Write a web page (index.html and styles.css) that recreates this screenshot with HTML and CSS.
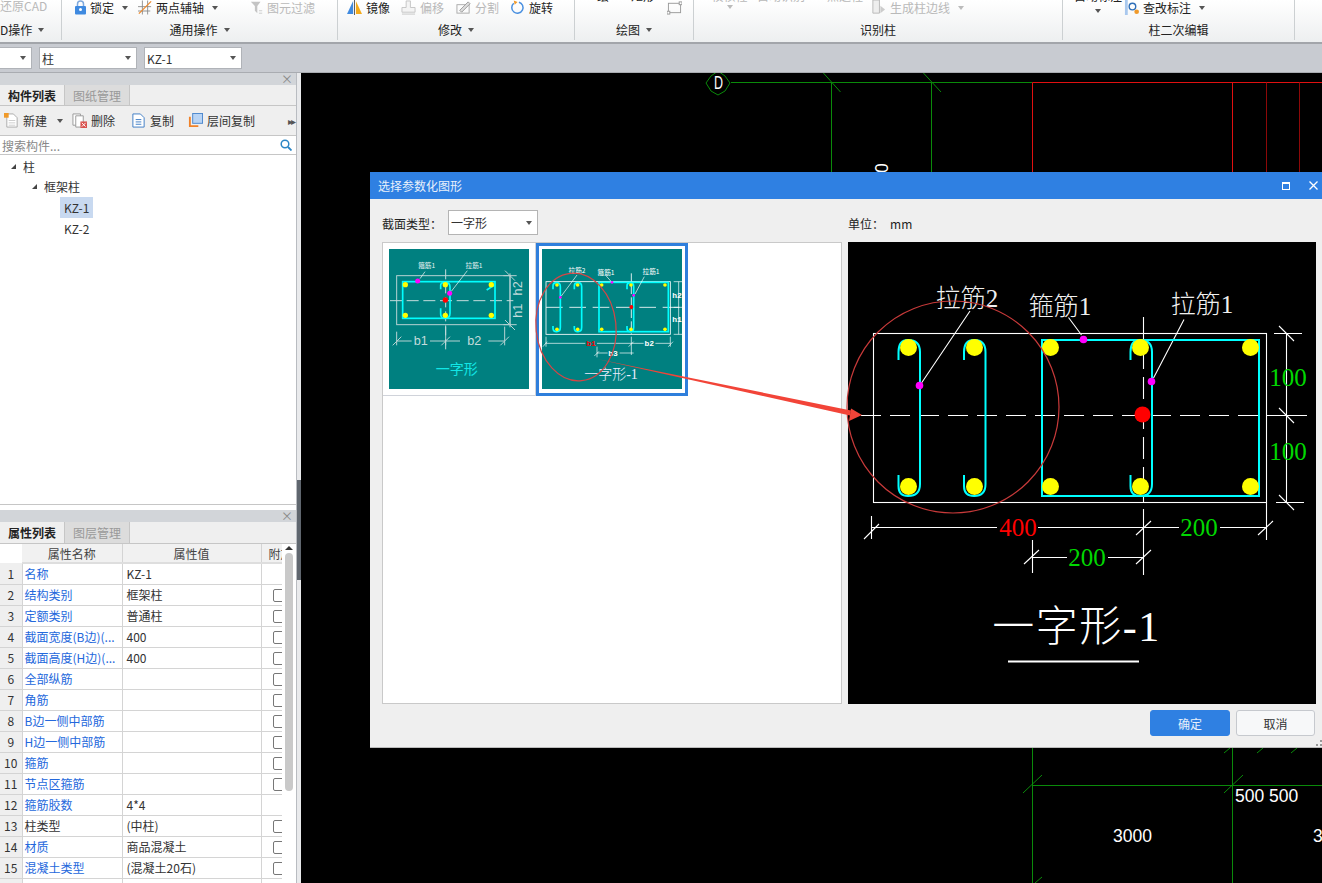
FILE: index.html
```html
<!DOCTYPE html>
<html lang="zh-CN">
<head>
    <meta charset="UTF-8">
    <title>选择参数化图形</title>
    <link rel="stylesheet" href="styles.css">
</head>
<body>

    <!-- Ribbon -->
    <header class="ribbon">
        <section class="group group-cad">
            <div class="tools"><div class="tool off"><span>还原CAD</span></div></div>
            <div class="group-label"><span>D操作</span><i class="caret"></i></div>
        </section>
        <section class="group group-common">
            <div class="tools">
                <div class="tool">
                    <svg class="icon icon-lock" viewBox="0 0 11 15"><path d="M2.500 7V4a3 3 0 0 1 6 0v3" fill="none" stroke="#7fa9dd" stroke-width="1.500"/><rect x="0" y="6" width="11" height="8.500" rx="1" fill="#3f8ae0"/><circle cx="5.500" cy="9.500" r="1.500" fill="#fff"/></svg>
                    <span>锁定</span><i class="caret"></i>
                </div>
                <div class="tool">
                    <svg class="icon icon-axis" viewBox="0 0 16 16"><path d="M0 7H15M0 12H14M5 0V16M11 0V16" stroke="#888" fill="none"/><path d="M1 15L15 1" stroke="#ee8a2c" stroke-width="1.400"/></svg>
                    <span>两点辅轴</span><i class="caret"></i>
                </div>
                <div class="tool off">
                    <svg class="icon icon-filter" viewBox="0 0 16 16"><path d="M1 1H13L9 6V15L6 12V6Z" fill="#c4c4c4"/><path d="M11 12H15M11 15H15" stroke="#c4c4c4"/></svg>
                    <span>图元过滤</span>
                </div>
            </div>
            <div class="group-label"><span>通用操作</span><i class="caret"></i></div>
        </section>
        <section class="group group-edit">
            <div class="tools">
                <div class="tool">
                    <svg class="icon" viewBox="0 0 16 16"><path d="M6.500 1V15H0Z" fill="#3f8ae0"/><path d="M9.500 1V15H16Z" fill="#f4ab1c"/><path d="M8 0V16" stroke="#555"/></svg>
                    <span>镜像</span>
                </div>
                <div class="tool off">
                    <svg class="icon" viewBox="0 0 16 16"><path d="M5.500 1H10V8H15V13H1V8H5.500Z" fill="#f4f4f4" stroke="#c4c4c4"/><path d="M1 15H15" stroke="#c4c4c4"/></svg>
                    <span>偏移</span>
                </div>
                <div class="tool off">
                    <svg class="icon" viewBox="0 0 16 16"><rect x="1" y="5" width="13" height="9" fill="none" stroke="#aaa"/><path d="M4 11L13 2L15 4L6 13Z" fill="#ddd" stroke="#999"/></svg>
                    <span>分割</span>
                </div>
                <div class="tool">
                    <svg class="icon" viewBox="0 0 16 16"><path d="M9.500 2.300A6 6 0 1 1 4 3.500" fill="none" stroke="#4a90e0" stroke-width="1.600"/><path d="M4 0.500L8 2L5 5Z" fill="#f09a2a"/></svg>
                    <span>旋转</span>
                </div>
            </div>
            <div class="group-label"><span>修改</span><i class="caret"></i></div>
        </section>
        <section class="group group-draw">
            <div class="tools">
                <span class="clipped">绘</span>
                <span class="clipped">矩形</span>
                <svg class="icon" viewBox="0 0 16 16"><rect x="1.500" y="3.500" width="13" height="10" fill="none" stroke="#999"/><rect x="0" y="12" width="3" height="3" fill="#fff" stroke="#999"/><rect x="13" y="2" width="3" height="3" fill="#fff" stroke="#999"/></svg>
            </div>
            <div class="group-label"><span>绘图</span><i class="caret"></i></div>
        </section>
        <section class="group group-identify">
            <div class="tools">
                <div class="stack"><span class="clipped off">校核柱</span><i class="caret caret-off"></i></div>
                <span class="clipped off">自动识别</span>
                <span class="clipped off">点选柱</span>
                <div class="tool off">
                    <svg class="icon" viewBox="0 0 16 16"><path d="M2 0H9V14H2Z" fill="#eee" stroke="#b8b8b8"/><path d="M10 6L15 10L10 14Z" fill="#ccc"/></svg>
                    <span>生成柱边线</span><i class="caret caret-off"></i>
                </div>
            </div>
            <div class="group-label"><span>识别柱</span></div>
        </section>
        <section class="group group-second">
            <div class="tools">
                <div class="stack"><span class="clipped">自动标注</span><i class="caret caret-low"></i></div>
                <div class="tool">
                    <svg class="icon" viewBox="0 0 16 16"><path d="M1 0H4V16H1" fill="#a9c8ee"/><circle cx="9" cy="7" r="3.500" fill="none" stroke="#2f6fb8" stroke-width="1.500"/><circle cx="13.500" cy="12.500" r="2.500" fill="#f09a2a"/></svg>
                    <span>查改标注</span><i class="caret"></i>
                </div>
            </div>
            <div class="group-label"><span>柱二次编辑</span></div>
        </section>
    </header>

    <div class="quickbar">
        <div class="combo combo-first"><i class="caret"></i></div>
        <div class="combo"><span>柱</span><i class="caret"></i></div>
        <div class="combo"><span>KZ-1</span><i class="caret"></i></div>
    </div>

    <div class="workspace">
        <aside class="side">
            <!-- Component list -->
            <section class="panel panel-list">
                <div class="panel-head">×</div>
                <div class="tabs">
                    <div class="tab active">构件列表</div>
                    <div class="tab">图纸管理</div>
                </div>
                <div class="side-tools">
                    <div class="side-tool side-new">
                        <svg class="icon" viewBox="0 0 16 16"><path d="M3 1H10L14 5V15H3Z" fill="#fff" stroke="#aaa"/><path d="M5 8H12M5 10.500H12M5 13H12" stroke="#ccc"/><rect x="0" y="0" width="5" height="5" fill="#f09a2a"/></svg>
                        <span>新建</span><i class="caret"></i>
                    </div>
                    <div class="side-tool side-del">
                        <svg class="icon" viewBox="0 0 16 16"><path d="M1 1H9V13H1Z" fill="#fff" stroke="#999"/><path d="M4 3H12V15H4Z" fill="#fff" stroke="#999"/><rect x="9" y="9" width="7" height="7" fill="#d9534f"/><path d="M10.500 10.500L14.500 14.500M14.500 10.500L10.500 14.500" stroke="#fff"/></svg>
                        <span>删除</span>
                    </div>
                    <div class="side-tool side-copy">
                        <svg class="icon" viewBox="0 0 16 16"><path d="M2 1H10L14 5V15H2Z" fill="#fff" stroke="#3d7cc4"/><path d="M5 7H11M5 9.500H11M5 12H11" stroke="#3d7cc4"/></svg>
                        <span>复制</span>
                    </div>
                    <div class="side-tool side-floor">
                        <svg class="icon" viewBox="0 0 16 16"><path d="M3 4V13H1V4ZM1 15V13H11V15Z" fill="#f0822a"/><rect x="5" y="0.500" width="10.500" height="10.500" fill="#b8d4f5" stroke="#4a86cc"/></svg>
                        <span>层间复制</span>
                    </div>
                    <div class="side-more">▸▸</div>
                </div>
                <div class="search">
                    <span>搜索构件...</span>
                    <svg class="search-icon" viewBox="0 0 12 12"><circle cx="5" cy="5" r="3.800" fill="none" stroke="#2b86c5" stroke-width="1.500"/><path d="M8 8L11.500 11.500" stroke="#2b86c5" stroke-width="1.800"/></svg>
                </div>
                <ul class="tree">
                    <li class="tree-root"><i class="tree-arrow"></i>柱</li>
                    <li class="tree-branch"><i class="tree-arrow"></i>框架柱</li>
                    <li class="tree-leaf"><span class="selected">KZ-1</span></li>
                    <li class="tree-leaf"><span>KZ-2</span></li>
                </ul>
            </section>

            <!-- Property list -->
            <section class="panel panel-props">
                <div class="panel-head">×</div>
                <div class="tabs">
                    <div class="tab active">属性列表</div>
                    <div class="tab">图层管理</div>
                </div>
                <div class="props-body">
                    <table class="props">
                        <thead>
                            <tr><th class="num"></th><th class="name">属性名称</th><th class="value">属性值</th><th class="extra">附加</th></tr>
                        </thead>
                        <tbody>
                            <tr><td class="num">1</td><td class="name"><a>名称</a></td><td class="value">KZ-1</td><td class="extra"></td></tr>
                            <tr><td class="num">2</td><td class="name"><a>结构类别</a></td><td class="value">框架柱</td><td class="extra"><i class="check"></i></td></tr>
                            <tr><td class="num">3</td><td class="name"><a>定额类别</a></td><td class="value">普通柱</td><td class="extra"><i class="check"></i></td></tr>
                            <tr><td class="num">4</td><td class="name"><a>截面宽度(B边)(...</a></td><td class="value">400</td><td class="extra"><i class="check"></i></td></tr>
                            <tr><td class="num">5</td><td class="name"><a>截面高度(H边)(...</a></td><td class="value">400</td><td class="extra"><i class="check"></i></td></tr>
                            <tr><td class="num">6</td><td class="name"><a>全部纵筋</a></td><td class="value"></td><td class="extra"><i class="check"></i></td></tr>
                            <tr><td class="num">7</td><td class="name"><a>角筋</a></td><td class="value"></td><td class="extra"><i class="check"></i></td></tr>
                            <tr><td class="num">8</td><td class="name"><a>B边一侧中部筋</a></td><td class="value"></td><td class="extra"><i class="check"></i></td></tr>
                            <tr><td class="num">9</td><td class="name"><a>H边一侧中部筋</a></td><td class="value"></td><td class="extra"><i class="check"></i></td></tr>
                            <tr><td class="num">10</td><td class="name"><a>箍筋</a></td><td class="value"></td><td class="extra"><i class="check"></i></td></tr>
                            <tr><td class="num">11</td><td class="name"><a>节点区箍筋</a></td><td class="value"></td><td class="extra"><i class="check"></i></td></tr>
                            <tr><td class="num">12</td><td class="name"><a>箍筋胶数</a></td><td class="value">4*4</td><td class="extra"></td></tr>
                            <tr><td class="num">13</td><td class="name">柱类型</td><td class="value">(中柱)</td><td class="extra"><i class="check"></i></td></tr>
                            <tr><td class="num">14</td><td class="name"><a>材质</a></td><td class="value">商品混凝土</td><td class="extra"><i class="check"></i></td></tr>
                            <tr><td class="num">15</td><td class="name"><a>混凝土类型</a></td><td class="value">(混凝土20石)</td><td class="extra"><i class="check"></i></td></tr>
                            <tr><td class="num"></td><td class="name"></td><td class="value"></td><td class="extra"><i class="check"></i></td></tr>
                        </tbody>
                    </table>
                    <div class="scrollbar">
                        <i class="scroll-up"></i>
                        <div class="scroll-thumb"></div>
                    </div>
                </div>
            </section>
        </aside>

        <div class="splitter"><div class="splitter-grip"></div></div>

        <!-- Drawing canvas -->
        <main class="canvas">
            <svg class="canvas-svg" viewBox="301 73 1021 810">
                <g class="axis-green">
                    <path d="M731 82.500H1032.500"/>
                    <path d="M831.500 82.500V172M931.500 82.500V172"/>
                    <path d="M822.500 72L840.500 92M922.500 72L941 92"/>
                    <path d="M711 76L718 71L725 76L730 83L725 91L718 95L711 91L706 83Z"/>
                    <path d="M1032.500 748V883M1232.500 748V883M1032.500 785.500H1322"/>
                    <path d="M1023 793L1042 775M1224 793L1243 775M1224 753L1230 748M1257 753L1263 748M1291 753L1297 748M1035 883L1042 877"/>
                </g>
                <g class="axis-red">
                    <path d="M1032.500 82.500H1322"/>
                    <path d="M1032.500 82.500V172M1232.500 82.500V172"/>
                    <path class="axis-dark" d="M1266.500 82.500V172M1299.500 82.500V172"/>
                </g>
                <text class="canvas-text" x="714" y="89" textLength="9" lengthAdjust="spacingAndGlyphs">D</text>
                <text class="canvas-num" x="881" y="168" text-anchor="middle" transform="rotate(90 881 168) translate(0 6)">0</text>
                <text class="canvas-num" x="1235" y="802">500</text>
                <text class="canvas-num" x="1269" y="802">500</text>
                <text class="canvas-num" x="1113" y="842">3000</text>
                <text class="canvas-num" x="1313" y="842">3000</text>
            </svg>

            <div class="dialog">
                <div class="dialog-title">
                    <span>选择参数化图形</span>
                    <div class="win-btns">
                        <i class="win-max"></i>
                        <svg class="win-close" viewBox="0 0 9 9"><path d="M0.500 0.500L8.500 8.500M8.500 0.500L0.500 8.500" stroke="#fff" stroke-width="1.300"/></svg>
                    </div>
                </div>
                <div class="dialog-options">
                    <div class="option-left">
                        <label>截面类型：</label>
                        <div class="combo combo-type"><span>一字形</span><i class="caret"></i></div>
                    </div>
                    <div class="option-unit"><span>单位：</span><span class="unit">mm</span></div>
                </div>
                <div class="dialog-content">
                    <div class="thumbs">
                        <div class="thumb">
                            <svg class="thumb-svg" viewBox="27 27 420 420">
                                <rect x="27" y="27" width="420" height="420" fill="#008080"/>
                                <g fill="none" stroke="#b6d2d2" stroke-width="3">
                                    <rect x="50" y="107" width="340" height="147"/>
                                    <path d="M370 107H410M370 254H410M390 100V262M375 92L405 122M375 240L405 270"/>
                                    <path d="M50 275V316M197 260V316M374 260V316M50 303H95M150 303H240M325 303H374"/>
                                    <path d="M38 316L64 290M184 316L210 290M361 316L387 290"/>
                                </g>
                                <path d="M30 182H400" stroke="#c4dcdc" stroke-width="3" stroke-dasharray="36 14"/>
                                <path d="M197 88V336" stroke="#c4dcdc" stroke-width="3" stroke-dasharray="30 12"/>
                                <rect x="68" y="125" width="277" height="110" fill="none" stroke="#0ff" stroke-width="5"/>
                                <path d="M182 148V136Q182 127 195 127Q210 127 210 140V220Q210 235 195 235Q182 235 182 222V205M320 150L342 136" fill="none" stroke="#0ff" stroke-width="5"/>
                                <path d="M120 116L135 95M214 154L262 92" stroke="#fff" stroke-width="2"/>
                                <g fill="#ff0">
                                    <circle cx="76" cy="134" r="8"/><circle cx="196" cy="134" r="8"/><circle cx="334" cy="134" r="8"/>
                                    <circle cx="76" cy="226" r="8"/><circle cx="196" cy="226" r="8"/><circle cx="334" cy="226" r="8"/>
                                </g>
                                <circle cx="113" cy="123" r="7.500" fill="#f0f"/>
                                <circle cx="209" cy="160" r="7.500" fill="#f0f"/>
                                <circle cx="196" cy="180" r="8" fill="#f00"/>
                                <text class="thumb-note" x="140" y="85" text-anchor="middle">箍筋1</text>
                                <text class="thumb-note" x="282" y="85" text-anchor="middle">拉筋1</text>
                                <text class="thumb-dim" x="122" y="316" text-anchor="middle">b1</text>
                                <text class="thumb-dim" x="283" y="316" text-anchor="middle">b2</text>
                                <text class="thumb-dim" x="430" y="145" text-anchor="middle" transform="rotate(-90 430 145) translate(0 -4)">h2</text>
                                <text class="thumb-dim" x="430" y="212" text-anchor="middle" transform="rotate(-90 430 212) translate(0 -4)">h1</text>
                                <text class="thumb-title" x="230" y="403" text-anchor="middle">一字形</text>
                            </svg>
                        </div>
                        <div class="thumb-sep"></div>
                        <div class="thumb thumb-selected">
                            <svg class="thumb-svg" viewBox="485 27 420 420">
                                <rect x="485" y="27" width="420" height="420" fill="#008080"/>
                                <rect x="497" y="125" width="373" height="158" fill="none" stroke="#fff" stroke-width="2.500"/>
                                <path d="M497 202H905" stroke="#fff" stroke-width="2.500" stroke-dasharray="50 20"/>
                                <path d="M753 100V283" stroke="#fff" stroke-width="2.500" stroke-dasharray="26 10"/>
                                <rect x="656" y="127" width="208" height="148" fill="none" stroke="#0ff" stroke-width="5"/>
                                <g fill="none" stroke="#0ff" stroke-width="5">
                                    <path d="M518 148V138Q518 128 529 128Q540 128 540 140V262Q540 275 529 275Q518 275 518 265V258"/>
                                    <path d="M582 148V138Q582 128 593 128Q604 128 604 140V262Q604 275 593 275Q582 275 582 265V258"/>
                                    <path d="M740 148V138Q740 128 750 128Q760 128 760 140V262Q760 275 750 275Q740 275 740 265V258"/>
                                </g>
                                <g fill="#ff0">
                                    <circle cx="530" cy="135" r="5.500"/><circle cx="592" cy="135" r="5.500"/><circle cx="664" cy="135" r="5.500"/><circle cx="752" cy="135" r="5.500"/><circle cx="854" cy="135" r="5.500"/>
                                    <circle cx="530" cy="268" r="5.500"/><circle cx="592" cy="268" r="5.500"/><circle cx="664" cy="268" r="5.500"/><circle cx="752" cy="268" r="5.500"/><circle cx="854" cy="268" r="5.500"/>
                                </g>
                                <circle cx="540" cy="172" r="4" fill="#f0f"/>
                                <circle cx="695" cy="127" r="4" fill="#f0f"/>
                                <circle cx="760" cy="166" r="4" fill="#f0f"/>
                                <circle cx="753" cy="201" r="6" fill="#f00"/>
                                <g fill="none" stroke="#fff" stroke-width="2">
                                    <path d="M543 168L590 105M676 106L692 124M764 162L792 110"/>
                                    <path d="M895 125V283M880 125H905M880 202H905M880 283H905"/>
                                    <path d="M497 310H615M650 310H790M825 310H870M497 290V320M753 290V345M870 290V320"/>
                                    <path d="M650 339H682M718 339H760M650 320V352"/>
                                    <path d="M488 320L500 305M745 320L760 305M864 320L878 305M642 348L656 334"/>
                                </g>
                                <text class="thumb-note thumb-note-w" x="590" y="98" text-anchor="middle">拉筋2</text>
                                <text class="thumb-note thumb-note-w" x="677" y="105" text-anchor="middle">箍筋1</text>
                                <text class="thumb-note thumb-note-w" x="812" y="103" text-anchor="middle">拉筋1</text>
                                <text class="thumb-small thumb-red" x="632" y="318" text-anchor="middle">b1</text>
                                <text class="thumb-small" x="807" y="318" text-anchor="middle">b2</text>
                                <text class="thumb-small" x="698" y="347" text-anchor="middle">b3</text>
                                <text class="thumb-small" x="890" y="175" text-anchor="middle">h2</text>
                                <text class="thumb-small" x="890" y="245" text-anchor="middle">h1</text>
                                <text class="thumb-title thumb-title-w" x="692" y="418" text-anchor="middle">一字形-1</text>
                            </svg>
                        </div>
                    </div>
                    <div class="preview">
                        <svg class="preview-svg" viewBox="848 242 468 462">
                            <g class="thin">
                                <rect x="873.500" y="333.500" width="393" height="169"/>
                                <path d="M1274 333.500H1302M1274 415.500H1307M1276 502.500H1304M1286.500 333.500V502.500"/>
                                <path d="M1279 326L1294 341M1279 408L1294 423M1279 495L1294 510"/>
                                <path d="M871.500 516V539M1143.500 509V536M1266.500 502V540M871.500 527.500H997M1038 527.500H1179M1220 527.500H1266.500"/>
                                <path d="M864 539L879 524M1136 535L1151 521M1258 535L1273 521"/>
                                <path d="M1032.500 540V573M1143.500 536V575M1032.500 557.500H1067M1108 557.500H1143.500"/>
                                <path d="M1024 564L1039 550M1136 564L1151 550"/>
                                <path d="M970 311L921.500 383M1068.500 317.500L1081.500 335M1184 319.500L1153.500 378"/>
                            </g>
                            <path class="thin" d="M861 415.500H1307" stroke-dasharray="20 9"/>
                            <path class="thin" d="M1143.500 317V502" stroke-dasharray="22 8"/>
                            <rect class="rebar" x="1042" y="340" width="217" height="156"/>
                            <path class="tie" d="M898.500 360V352Q898.500 340 908 340Q920 340 920 352V484Q920 496 908 496Q898.500 496 898.500 486V475"/>
                            <path class="tie" d="M964 360V352Q964 340 974 340Q985.500 340 985.500 352V484Q985.500 496 974 496Q964 496 964 486V475"/>
                            <path class="tie" d="M1130.500 360V352Q1130.500 340 1140 340Q1152 340 1152 352V484Q1152 496 1140 496Q1130.500 496 1130.500 486V475"/>
                            <g fill="#ff0">
                                <circle cx="908.500" cy="347.500" r="8.500"/><circle cx="974.500" cy="347.500" r="8.500"/><circle cx="1050.500" cy="347.500" r="8.500"/><circle cx="1140.500" cy="347.500" r="8.500"/><circle cx="1250.500" cy="347.500" r="8.500"/>
                                <circle cx="908.500" cy="486.500" r="8.500"/><circle cx="974.500" cy="486.500" r="8.500"/><circle cx="1050.500" cy="486.500" r="8.500"/><circle cx="1140.500" cy="486.500" r="8.500"/><circle cx="1250.500" cy="486.500" r="8.500"/>
                            </g>
                            <g fill="#f0f">
                                <circle cx="919.500" cy="385.500" r="3.800"/><circle cx="1083.500" cy="339.500" r="3.800"/><circle cx="1151.500" cy="381.500" r="3.800"/>
                            </g>
                            <circle cx="1142.500" cy="414.500" r="8" fill="#f00"/>
                            <text class="cad-note" x="967" y="307" text-anchor="middle">拉筋2</text>
                            <text class="cad-note" x="1060" y="315" text-anchor="middle">箍筋1</text>
                            <text class="cad-note" x="1202" y="313" text-anchor="middle">拉筋1</text>
                            <text class="cad-dim green" x="1288" y="386" text-anchor="middle">100</text>
                            <text class="cad-dim green" x="1288" y="460" text-anchor="middle">100</text>
                            <text class="cad-dim red" x="1018" y="536" text-anchor="middle">400</text>
                            <text class="cad-dim green" x="1199" y="536" text-anchor="middle">200</text>
                            <text class="cad-dim green" x="1087" y="566" text-anchor="middle">200</text>
                            <text class="cad-title" x="1076.500" y="641" text-anchor="middle">一字形-1</text>
                            <path d="M1008 661.500H1139" stroke="#fff" stroke-width="2"/>
                        </svg>
                    </div>
                </div>
                <div class="dialog-footer">
                    <button class="btn btn-primary">确定</button>
                    <button class="btn">取消</button>
                </div>
                <svg class="grip" viewBox="0 0 6 6"><path d="M4 0h2v2H4zM0 4h2v2H0zM4 4h2v2H4z" fill="#999"/></svg>
            </div>
        </main>
    </div>

    <!-- Red marks drawn over the whole window -->
    <svg class="marks" viewBox="0 0 1322 883">
        <ellipse cx="576" cy="327" rx="40" ry="54" transform="rotate(-6 576 327)" fill="none" stroke="#d64545" stroke-width="1.200"/>
        <circle cx="953" cy="407" r="106" fill="none" stroke="#c83a3a" stroke-width="1.200"/>
        <path d="M597 359L851 410.500L850 415.500Z" fill="#f24438"/>
        <path d="M862 415L851 408.500L849 421Z" fill="#f24438"/>
    </svg>

</body>
</html>
```

FILE: styles.css
```css
/* General Styling */
* {
    box-sizing: border-box;
}

body {
    position: relative;
    width: 1322px;
    height: 883px;
    margin: 0;
    overflow: hidden;
    background-color: #000;
    color: #222;
    font-family: "Noto Sans CJK SC", "Liberation Sans", sans-serif;
    font-size: 12px;
    line-height: 13px;
}

.icon {
    flex: none;
    width: 15px;
    height: 15px;
}

.icon-lock {
    width: 11px;
}

.icon-axis {
    width: 14px;
}

.icon-filter {
    width: 13px;
}

.caret {
    display: inline-block;
    flex: none;
    width: 0;
    height: 0;
    border-top: 4px solid #555;
    border-left: 3.5px solid transparent;
    border-right: 3.5px solid transparent;
}

.caret-off {
    border-top-color: #bbb;
}

/* Ribbon */
.ribbon {
    display: flex;
    height: 44px;
    overflow: hidden;
    background: linear-gradient(#fff, #edeff0);
    border-bottom: 2px solid #a2a5aa;
}

.group {
    flex: none;
    height: 40px;
    border-right: 1px solid #ccd0d2;
}

.tools {
    display: grid;
    align-items: center;
    height: 12px;
    line-height: 12px;
}

.tool {
    display: flex;
    align-items: center;
    gap: 4px;
}

.tool .caret {
    margin-left: 4px;
}

.off {
    color: #b9b9b9;
}

.clipped {
    align-self: start;
    margin-top: -10px;
    white-space: nowrap;
}

.stack {
    display: flex;
    flex-direction: column;
    align-items: center;
    align-self: start;
}

.stack .clipped {
    align-self: center;
}

.stack .caret {
    margin-top: 3px;
}

.stack .caret-low {
    margin-top: 7px;
}

.group-label {
    display: flex;
    justify-content: center;
    align-items: center;
    gap: 6px;
    height: 13px;
    margin-top: 11px;
    white-space: nowrap;
}

.group-cad {
    width: 62px;
}

.group-cad .tool {
    white-space: nowrap;
}

.group-cad .group-label {
    justify-content: flex-start;
}

.group-common {
    width: 276px;
}

.group-common .tools {
    grid-template-columns: 63px 112px auto;
    padding-left: 13px;
}

.group-edit {
    width: 237px;
}

.group-edit .tools {
    grid-template-columns: 54px 55px 54px auto;
    padding-left: 9px;
}

.group-draw {
    width: 119px;
}

.group-draw .tools {
    grid-template-columns: 34px 36px auto;
    padding-left: 22px;
}

.group-identify {
    width: 369px;
}

.group-identify .tools {
    grid-template-columns: 55px 70px 44px auto;
    padding-left: 8px;
}

.group-second {
    width: 232px;
}

.group-second .tools {
    grid-template-columns: 52px auto;
    padding-left: 9px;
}

/* Quick bar with the selectors */
.quickbar {
    display: flex;
    gap: 7px;
    height: 29px;
    padding-top: 3px;
    background-color: #c8cbd1;
    border-bottom: 1px solid #a9acb1;
}

.combo {
    display: flex;
    justify-content: space-between;
    align-items: center;
    width: 98px;
    height: 22px;
    padding: 0 5px 0 2px;
    background-color: #fff;
    border: 1px solid #b0b3b8;
    color: #333;
}

.combo-first {
    justify-content: flex-end;
    width: 32px;
    border-left: none;
}

/* Workspace */
.workspace {
    display: flex;
    height: 810px;
}

.side {
    display: flex;
    flex-direction: column;
    flex: none;
    width: 297px;
    background-color: #fff;
    border-right: 1px solid #b9bcc1;
}

.splitter {
    flex: none;
    width: 4px;
    padding-top: 407px;
    background-color: #e9eaec;
}

.splitter-grip {
    height: 100px;
    background-color: #5f666e;
}

.panel-head {
    height: 12px;
    padding-right: 3px;
    background-color: #d2d5d9;
    color: #888;
    font-size: 12px;
    line-height: 12px;
    text-align: right;
}

.tabs {
    display: flex;
    height: 22px;
    background-color: #efefef;
    border-bottom: 1px solid #c6c6c6;
}

.tab {
    width: 65px;
    padding-top: 4px;
    background-color: #dcdcdc;
    border-right: 1px solid #c6c6c6;
    color: #999;
    text-align: center;
}

.tab.active {
    background-color: #efefef;
    color: #222;
    font-weight: 700;
}

/* Component list */
.panel-list {
    flex: none;
    height: 432px;
    border-bottom: 1px solid #c6c6c6;
}

.panel-list .tabs {
    height: 21px;
}

.side-tools {
    display: flex;
    align-items: center;
    height: 30px;
    background-color: #efefef;
    border-bottom: 1px solid #c6c6c6;
}

.side-tool {
    display: flex;
    align-items: center;
    gap: 4px;
    color: #333;
}

.side-new {
    width: 72px;
    padding-left: 4px;
}

.side-new .caret {
    margin-left: 6px;
}

.side-del {
    width: 59px;
}

.side-copy {
    width: 57px;
}

.side-floor {
    width: 97px;
}

.side-more {
    margin-left: 3px;
    color: #555;
    font-size: 10px;
    letter-spacing: -2px;
}

.search {
    display: flex;
    justify-content: space-between;
    align-items: center;
    height: 19px;
    padding: 0 4px 0 2px;
    border-bottom: 1px solid #c6c6c6;
    color: #888;
}

.search-icon {
    width: 12px;
    height: 12px;
}

.tree {
    margin: 0;
    padding: 0;
    color: #333;
    list-style: none;
}

.tree li {
    display: flex;
    align-items: center;
    height: 21px;
}

.tree-arrow {
    width: 0;
    height: 0;
    margin-right: 7px;
    border-bottom: 5px solid #444;
    border-left: 5px solid transparent;
}

.tree .tree-root {
    padding: 2px 0 0 11px;
}

.tree-branch {
    padding-left: 32px;
}

.tree-leaf {
    padding-left: 60px;
}

.tree-leaf span {
    display: block;
    padding: 4px;
}

.tree-leaf .selected {
    background-color: #c8d9f0;
}

/* Property list */
.panel-props {
    flex: 1;
    min-height: 0;
    margin-top: 5px;
    overflow: hidden;
}

.props-body {
    display: flex;
    height: 340px;
}

.props {
    flex: none;
    width: 282px;
    border-collapse: collapse;
    table-layout: fixed;
}

.props th {
    height: 19px;
    padding: 0;
    background-color: #f1f1f1;
    border-right: 1px solid #d4d4d4;
    border-bottom: 2px solid #dedede;
    color: #444;
    font-weight: 400;
    white-space: nowrap;
    overflow: hidden;
}

.props th.num {
    background-color: #fff;
    border-bottom: none;
    border-right: none;
}

.props td {
    height: 21px;
    padding: 0 4px;
    border-right: 1px solid #d4d4d4;
    border-bottom: 1px solid #d4d4d4;
    color: #333;
    white-space: nowrap;
    overflow: hidden;
}

.props .num {
    width: 22px;
}

.props .name {
    width: 100px;
}

.props .value {
    width: 139px;
}

.props .extra {
    width: 21px;
    border-right: none;
}

.props th.extra {
    padding-left: 7px;
    border-right: none;
    text-align: left;
}

.props td.num {
    padding: 0;
    background-color: #efefef;
    text-align: center;
}

.props td.name {
    padding-left: 2px;
}

.props td.extra {
    padding: 2px 0 0 11px;
    border-right: none;
}

.props a {
    color: #2468dc;
}

.check {
    display: block;
    width: 14px;
    height: 13px;
    border: 1px solid #777;
    border-radius: 2px;
}

.scrollbar {
    display: flex;
    flex-direction: column;
    align-items: center;
    width: 14px;
    padding: 2px 3px 0 3px;
}

.scroll-up {
    width: 0;
    height: 0;
    border-bottom: 4px solid #333;
    border-left: 4px solid transparent;
    border-right: 4px solid transparent;
}

.scroll-thumb {
    width: 8px;
    height: 238px;
    margin-top: 3px;
    background-color: #c9c9c9;
    border-radius: 4px;
}

/* Drawing canvas */
.canvas {
    position: relative;
    flex: 1;
    background-color: #000;
    overflow: hidden;
}

.canvas-svg {
    display: block;
    width: 1021px;
    height: 810px;
}

.canvas-svg path {
    fill: none;
}

.axis-green {
    stroke: #0a8a0a;
}

.axis-red {
    stroke: #e01010;
}

.canvas-svg .axis-dark {
    stroke: #8c0808;
}

.canvas-text {
    fill: #fff;
    font-family: "Liberation Sans", sans-serif;
    font-size: 18px;
}

.canvas-num {
    fill: #fff;
    font-family: "Liberation Sans", sans-serif;
    font-size: 17.500px;
}

/* Dialog over the canvas */
.dialog {
    position: absolute;
    top: 99px;
    left: 69px;
    width: 952px;
    height: 576px;
    background-color: #efefef;
    border-bottom: 1px solid #bbb;
}

.dialog-title {
    display: flex;
    justify-content: space-between;
    align-items: center;
    height: 27px;
    padding: 0 4px 0 8px;
    background-color: #2f80e2;
    color: #e8f0fb;
}

.win-btns {
    display: flex;
    align-items: center;
    gap: 19px;
}

.win-max {
    width: 8px;
    height: 8px;
    border: 1px solid #fff;
    border-top-width: 2px;
}

.win-close {
    width: 9px;
    height: 9px;
}

.dialog-options {
    display: flex;
    align-items: center;
    height: 25px;
    margin-top: 11px;
    padding-left: 12px;
}

.option-left {
    display: flex;
    align-items: center;
    width: 466px;
}

.option-left label {
    width: 66px;
    padding-top: 1px;
}

.option-unit {
    padding-top: 1px;
}

.combo-type {
    width: 90px;
    height: 25px;
    padding-left: 2px;
    border: 1px solid #b4b4b4;
}

.unit {
    margin-left: 6px;
}

.dialog-content {
    display: flex;
    gap: 6px;
    margin-top: 7px;
    padding-left: 12px;
}

.thumbs {
    display: flex;
    align-items: flex-start;
    width: 460px;
    height: 462px;
    background-color: #fff;
    border: 1px solid #c9c9c9;
}

.thumb {
    flex: none;
    height: 153px;
    padding: 6px 6px 7px 6px;
    border-bottom: 1px solid #d0d3da;
}

.thumb-sep {
    flex: none;
    width: 1px;
    height: 153px;
    background-color: #d0d3da;
}

.thumb-selected {
    padding: 3px;
    border: 3px solid #2f7fdc;
}

.thumb-svg {
    display: block;
    width: 140px;
    height: 140px;
}

.thumb-note {
    fill: #e4f2f2;
    font-size: 20px;
}

.thumb-note-w {
    fill: #fff;
}

.thumb-dim {
    fill: #c4dcdc;
    font-family: "Liberation Sans", sans-serif;
    font-size: 38px;
}

.thumb-small {
    fill: #fff;
    font-family: "Liberation Mono", monospace;
    font-size: 24px;
    font-weight: 700;
}

.thumb-red {
    fill: #f00;
}

.thumb-title {
    fill: #12e6e6;
    font-size: 42px;
}

.thumb-title-w {
    fill: #eef;
    font-family: "Liberation Serif", "Noto Sans CJK SC", serif;
    font-weight: 300;
}

.preview {
    width: 468px;
    height: 462px;
    background-color: #000;
}

.preview-svg {
    display: block;
    width: 468px;
    height: 462px;
}

.thin {
    fill: none;
    stroke: #fff;
    stroke-width: 1.100;
}

.rebar {
    fill: none;
    stroke: #0ff;
    stroke-width: 2;
}

.tie {
    fill: none;
    stroke: #0ff;
    stroke-width: 2;
}

.cad-note {
    fill: #f0f0f0;
    font-family: "Liberation Serif", "Noto Sans CJK SC", serif;
    font-size: 25px;
    font-weight: 300;
}

.cad-dim {
    font-family: "Liberation Serif", serif;
    font-size: 25px;
}

.green {
    fill: #00d800;
}

.red {
    fill: #f00;
}

.cad-title {
    fill: #fff;
    font-family: "Liberation Serif", "Noto Sans CJK SC", serif;
    font-size: 42px;
    font-weight: 300;
    letter-spacing: 1.500px;
}

.dialog-footer {
    display: flex;
    justify-content: flex-end;
    gap: 6px;
    margin-top: 6px;
    padding-right: 7px;
}

.btn {
    width: 79px;
    height: 26px;
    padding: 0;
    background-color: #f7f8f9;
    border: 1px solid #c6c9ce;
    border-radius: 3px;
    color: #333;
    font: inherit;
}

.btn-primary {
    width: 80px;
    background-color: #2f80e2;
    border-color: #2f80e2;
    color: #e8f0fb;
}

.grip {
    position: absolute;
    right: 0;
    bottom: 1px;
    width: 6px;
    height: 6px;
}

/* Annotation layer */
.marks {
    position: absolute;
    top: 0;
    left: 0;
    width: 1322px;
    height: 883px;
    pointer-events: none;
}
```
